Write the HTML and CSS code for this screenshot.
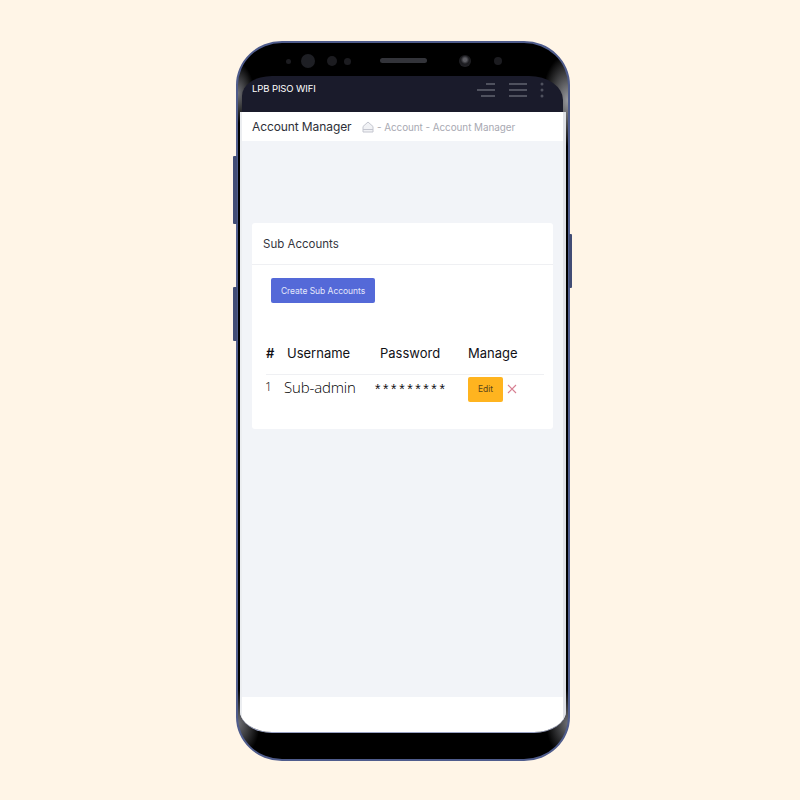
FILE: index.html
```html
<!DOCTYPE html>
<html lang="en">
<head>
<meta charset="utf-8">
<title>Account Manager</title>
<link rel="stylesheet" href="styles.css">
</head>
<body>
<div class="phone">
  <span class="side side-l1"></span>
  <span class="side side-l2"></span>
  <span class="side side-r1"></span>
  <div class="bezel-top">
    <span class="dot d1"></span>
    <span class="dot d2"></span>
    <span class="dot d3"></span>
    <span class="dot d4"></span>
    <span class="speaker"></span>
    <span class="lens"></span>
    <span class="dot d5"></span>
  </div>
  <div class="screen">
    <header class="topbar">
      <span class="brand">LPB PISO WIFI</span>
      <div class="topicons">
        <svg class="ico1" width="20" height="16" viewBox="0 0 20 16"><path d="M10 2h9M1 8h18M5 14h14" stroke="#4f515e" stroke-width="1.8" fill="none"/></svg>
        <svg class="ico2" width="20" height="16" viewBox="0 0 20 16"><path d="M1 2h18M1 8h18M1 14h18" stroke="#4f515e" stroke-width="1.8" fill="none"/></svg>
        <svg class="ico3" width="4" height="16" viewBox="0 0 4 16"><circle cx="2" cy="2" r="1.5" fill="#4f515e"/><circle cx="2" cy="8" r="1.5" fill="#4f515e"/><circle cx="2" cy="14" r="1.5" fill="#4f515e"/></svg>
      </div>
    </header>
    <div class="subbar">
      <h1 class="pagetitle">Account Manager</h1>
      <svg class="home" width="12" height="12" viewBox="0 0 12 12"><path d="M1 5.5 6 1l5 4.5V11H1zM1 8.5h10" stroke="#c4c6cf" stroke-width="1" fill="#f1f2f5"/></svg>
      <span class="crumb">- Account - Account Manager</span>
    </div>
    <main class="content">
      <section class="card">
        <div class="cardhead">Sub Accounts</div>
        <div class="cardbody">
          <button class="create">Create Sub Accounts</button>
          <table class="accounts">
            <thead>
              <tr><th class="c1">#</th><th class="c2">Username</th><th class="c3">Password</th><th class="c4">Manage</th></tr>
            </thead>
            <tbody>
              <tr>
                <td class="n">1</td>
                <td class="user">Sub-admin</td>
                <td class="pass">*********</td>
                <td class="manage"><button class="edit">Edit</button><svg class="del" width="10" height="10" viewBox="0 0 10 10"><path d="M1 1l8 8M9 1l-8 8" stroke="#d77f92" stroke-width="1.1" fill="none"/></svg></td>
              </tr>
            </tbody>
          </table>
        </div>
      </section>
    </main>
    <div class="footer"></div>
  </div>
</div>
</body>
</html>
```

FILE: styles.css
```css
* { box-sizing: border-box; }
html, body { margin: 0; padding: 0; height: 800px; overflow: hidden; }
body {
  background: #fff5e7;
  font-family: Inter, "Liberation Sans", sans-serif;
  padding: 41px 0 0 236px;
}
.phone {
  position: relative;
  width: 334px;
  height: 720px;
  border: 2px solid #4f5c8c;
  border-radius: 46px / 44px;
  background:
    radial-gradient(26px 46px at 100% 8%, #9a9ba0, rgba(120,120,125,0) 100%),
    radial-gradient(16px 30px at 0% 7%, #6f7075, rgba(110,110,115,0) 100%),
    radial-gradient(22px 34px at 100% 95%, #6f7075, rgba(110,110,115,0) 100%),
    radial-gradient(22px 34px at 0% 95%, #6f7075, rgba(110,110,115,0) 100%),
    #000;
  padding: 0 2px 26px 2px;
  display: flex;
  flex-direction: column;
}
.side { position: absolute; width: 4px; background: #414c75; border-radius: 1px; }
.side-l1 { left: -5px; top: 113px; height: 68px; }
.side-l2 { left: -5px; top: 244px; height: 54px; }
.side-r1 { right: -4px; top: 191px; height: 54px; width: 3px; }

.bezel-top { position: relative; height: 33px; flex: none; margin-left: 2px; }
.dot, .speaker, .lens { position: absolute; display: block; border-radius: 50%; background: #1c1c20; }
.d1 { left: 44px; top: 16px; width: 5px; height: 5px; }
.d2 { left: 59px; top: 11px; width: 14px; height: 14px; background: #1e1f24; }
.d3 { left: 85px; top: 13px; width: 10px; height: 10px; }
.d4 { left: 102px; top: 15px; width: 7px; height: 7px; }
.speaker { left: 138px; top: 15px; width: 47px; height: 5px; border-radius: 3px; background: #33343a; }
.lens { left: 217px; top: 12px; width: 12px; height: 12px; background: radial-gradient(circle at 50% 40%, #5c5c62 0 18%, #1b1b1f 45%, #26262a 100%); }
.d5 { left: 252px; top: 14px; width: 8px; height: 8px; }

.screen {
  flex: 1;
  display: flex;
  flex-direction: column;
  border-radius: 0 0 32px 32px / 0 0 22px 22px;
  overflow: hidden;
  border-bottom: 1px solid #9aa2c4;
}
.topbar {
  height: 36px;
  flex: none;
  margin: 0 3px 0 2px;
  border-radius: 30px 34px 0 0 / 20px 24px 0 0;
  background: #1a1b2b;
  color: #fff;
  display: flex;
  align-items: flex-start;
  justify-content: space-between;
  padding: 6px 19px 0 10px;
}
.brand { font-size: 9.5px; font-weight: 400; line-height: 14px; letter-spacing: -0.1px; }
.topicons { display: flex; align-items: center; gap: 12px; }
.subbar, .content, .footer {
  border-left: 2px solid #eceef1;
  border-right: 3px solid #dfe1e6;
}
.subbar {
  height: 29px;
  flex: none;
  background: #fff;
  display: flex;
  align-items: center;
  padding: 0 0 0 10px;
  color: #a8a9b2;
}
.pagetitle { margin: 0; font-size: 12px; font-weight: 400; color: #2e2f38; letter-spacing: -0.1px; width: 100px; white-space: nowrap; }
.home { margin-left: 10px; }
.crumb { margin-left: 3px; font-size: 9.9px; letter-spacing: -0.05px; white-space: nowrap; }
.content {
  height: 556px;
  flex: none;
  background: #f2f4f8;
  padding: 82px 10px 0;
}
.card {
  height: 206px;
  width: 301px;
  background: #fff;
  border-radius: 3px;
}
.cardhead {
  height: 42px;
  padding: 0 11px;
  display: flex;
  align-items: center;
  font-size: 11.5px;
  color: #34353d;
  border-bottom: 1px solid #eff0f3;
}
.cardbody { padding: 13px 9px 0 14px; }
.create {
  display: block;
  margin-left: 5px;
  width: 104px;
  height: 25px;
  padding: 0;
  border: 0;
  border-radius: 2px;
  background: #5469d8;
  color: #e4e8fb;
  font-family: inherit;
  font-size: 8.5px;
  letter-spacing: -0.05px;
}
.accounts { border-collapse: collapse; margin-top: 33px; table-layout: fixed; width: 278px; color: #111116; }
.accounts th { font-weight: 400; font-size: 13px; height: 38px; padding: 0 0 4px; text-align: left; border-bottom: 1px solid #eff0f3; white-space: nowrap; }
.accounts td { padding: 0; height: 27px; vertical-align: middle; }
.c1 { width: 21px; font-weight: 600 !important; }
.c2 { width: 93px; }
.c3 { width: 88px; }
.n { font-family: "Noto Sans", sans-serif; font-weight: 300; font-size: 12px; color: #222; position: relative; top: -2px; left: -1px; }
.accounts td.user { font-family: "Open Sans", sans-serif; font-weight: 300; font-size: 15px; color: #000; letter-spacing: -0.15px; white-space: nowrap; position: relative; left: -3px; top: -2px; }
.accounts td.pass { font-family: "Liberation Sans", sans-serif; font-size: 14px; letter-spacing: 2.6px; white-space: nowrap; position: relative; left: -5px; }
.manage { display: flex; align-items: center; gap: 4px; padding-top: 1px !important; height: 28px !important; }
.edit {
  width: 35px;
  height: 25px;
  padding: 0;
  border: 0;
  border-radius: 2px;
  background: #ffb41f;
  color: #5b451b;
  font-family: inherit;
  font-size: 8.5px;
}
.footer { flex: 1; background: #fff; }
```
